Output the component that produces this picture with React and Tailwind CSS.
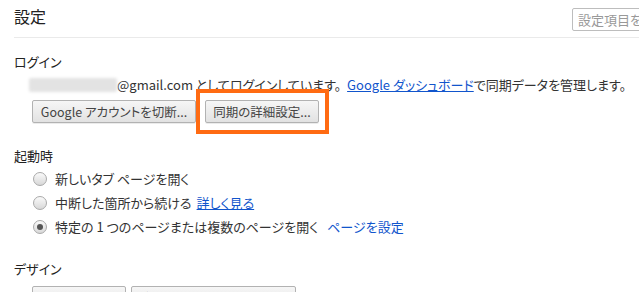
import React from "react";

const font = { fontFamily: "'Noto Sans CJK JP', sans-serif" };

const Btn = ({ children, className = "" }) => (
  <button
    className={`h-[23px] shrink-0 rounded-[2px] border border-[#b2b2b2] bg-gradient-to-b from-[#f6f6f6] to-[#e2e2e2] text-[12.5px] leading-[21px] text-[#444] shadow-[0_1px_0_rgba(0,0,0,0.08)] ${className}`}
  >
    {children}
  </button>
);

const Radio = ({ checked, children }) => (
  <div className="flex h-[24px] items-center">
    <span className="flex h-[14px] w-[14px] shrink-0 items-center justify-center rounded-full border border-[#a9a9a9] bg-gradient-to-b from-[#fafafa] to-[#d8d8d8]">
      {checked && <span className="h-[6px] w-[6px] rounded-full bg-[#555]" />}
    </span>
    <span className="ml-[8px] flex items-center">{children}</span>
  </div>
);

export default function App() {
  return (
    <div
      className="h-[292px] w-[639px] overflow-hidden bg-white text-[13px] text-[#333] [font-feature-settings:'palt']"
      style={font}
    >
      {/* Header */}
      <div className="flex items-start pl-[14px]">
        <h1 className="mt-[5px] text-[16px] leading-[22px] font-normal text-[#222]">設定</h1>
        <div className="ml-auto mt-[8px] -mr-[90px] flex h-[23px] w-[157px] shrink-0 items-center rounded-[2px] border border-[#bdbdbd] pl-[5px] text-[13px] text-[#999]">
          設定項目を検索
        </div>
      </div>
      <div className="ml-[14px] mt-[6px] h-px bg-[#eaeaea]" />

      <div className="pl-[14px]">
        {/* ログイン */}
        <h3 className="mt-[14px] text-[13px] leading-[20px] font-normal text-[#222]">ログイン</h3>
        <div className="mt-[3px] flex h-[20px] items-center whitespace-nowrap pl-[15px]">
          <span className="inline-block h-[14px] w-[88px] rounded-[2px] bg-[#e3e3e3] blur-[1.5px]" />
          <span>@gmail.com としてログインしています。</span>
          <a className="ml-[6px] text-[#1155cc] underline">Google ダッシュボード</a>
          <span>で同期データを管理します。</span>
        </div>
        <div className="mt-[5px] flex gap-[9px] pl-[18px]">
          <Btn className="w-[164px]">Google アカウントを切断...</Btn>
          <div className="relative">
            <Btn className="w-[114px]">同期の詳細設定...</Btn>
            <span className="pointer-events-none absolute -left-[9px] -top-[11px] h-[45px] w-[133px] border-4 border-[#ff6b12]" />
          </div>
        </div>

        {/* 起動時 */}
        <h3 className="mt-[23px] text-[13px] leading-[20px] font-normal text-[#222]">起動時</h3>
        <div className="mt-[1px] pl-[19px]">
          <Radio>新しいタブ ページを開く</Radio>
          <Radio>
            中断した箇所から続ける
            <a className="ml-[5px] text-[#1155cc] underline">詳しく見る</a>
          </Radio>
          <Radio checked>
            特定の 1 つのページまたは複数のページを開く
            <a className="ml-[9px] text-[#1155cc]">ページを設定</a>
          </Radio>
        </div>

        {/* デザイン */}
        <h3 className="mt-[20px] text-[13px] leading-[20px] font-normal text-[#222]">デザイン</h3>
        <div className="mt-[7px] flex gap-[5px] pl-[18px]">
          <Btn className="w-[94px]">テーマを取得</Btn>
          <Btn className="w-[165px]">デフォルトのテーマにリセット</Btn>
        </div>
      </div>
    </div>
  );
}
